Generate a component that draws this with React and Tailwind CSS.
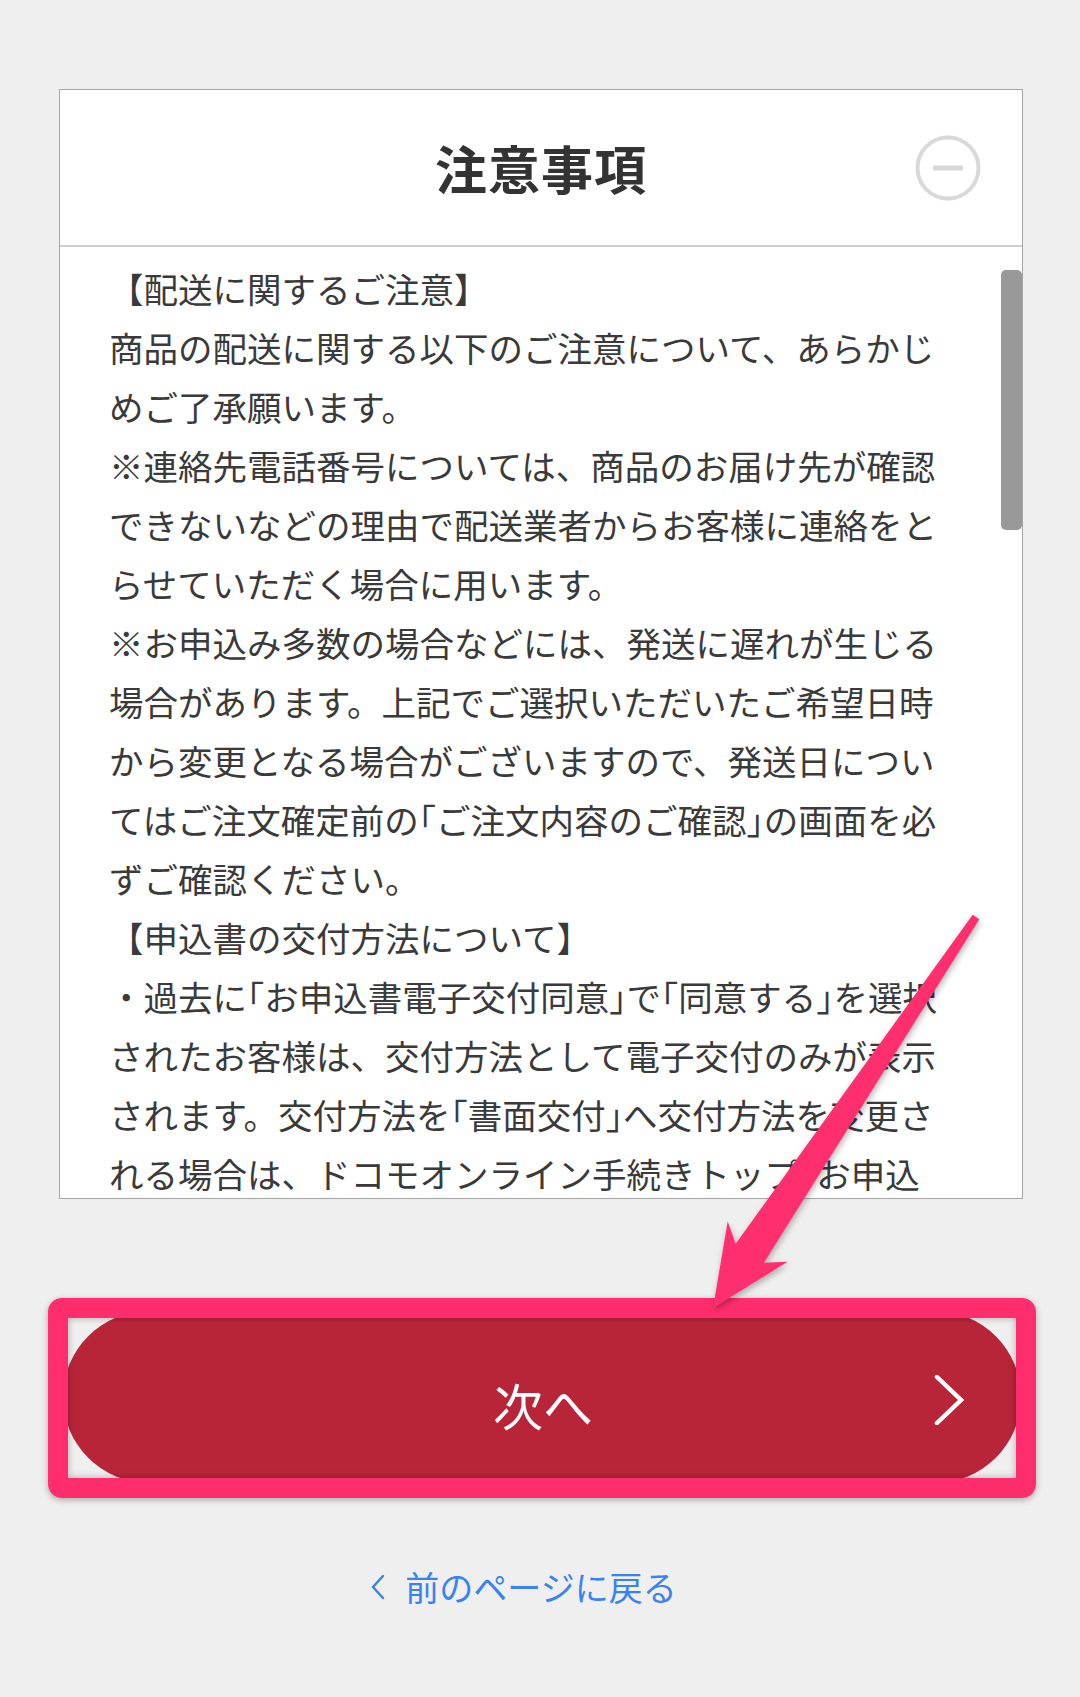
import React from "react";

const lines = [
  "【配送に関するご注意】",
  "商品の配送に関する以下のご注意について、あらかじ",
  "めご了承願います。",
  "※連絡先電話番号については、商品のお届け先が確認",
  "できないなどの理由で配送業者からお客様に連絡をと",
  "らせていただく場合に用います。",
  "※お申込み多数の場合などには、発送に遅れが生じる",
  "場合があります。上記でご選択いただいたご希望日時",
  "から変更となる場合がございますので、発送日につい",
  "てはご注文確定前の「ご注文内容のご確認」の画面を必",
  "ずご確認ください。",
  "【申込書の交付方法について】",
  "・過去に「お申込書電子交付同意」で「同意する」を選択",
  "されたお客様は、交付方法として電子交付のみが表示",
  "されます。交付方法を「書面交付」へ交付方法を変更さ",
  "れる場合は、ドコモオンライン手続きトップ「お申込",
];

// brackets get half-width so the long lines fit like the iOS rendering
const Line = ({ text }) => {
  const parts = text.split(/([「」])/);
  return (
    <div className="whitespace-nowrap">
      {parts.map((p, i) =>
        p === "「" || p === "」" ? (
          <span key={i} className="[font-feature-settings:'halt']">{p}</span>
        ) : (
          <span key={i}>{p}</span>
        )
      )}
    </div>
  );
};

const MinusCircle = () => (
  <svg width="66" height="66" viewBox="0 0 66 66" fill="none">
    <circle cx="33" cy="33" r="30.5" stroke="#d9d9d9" strokeWidth="4" />
    <line x1="18" y1="33" x2="48" y2="33" stroke="#d9d9d9" strokeWidth="5" />
  </svg>
);

export default function App() {
  return (
    <div
      className="relative w-[1080px] h-[1697px] overflow-hidden bg-[#efefef] text-[#333]"
      style={{ fontFamily: '"Noto Sans CJK JP", "Noto Sans", sans-serif' }}
    >
      <div className="pt-[89px] pl-[59px] pr-[57px]">
        {/* notice card */}
        <div className="bg-white border-[1.5px] border-[#a6a6a6]">
          <div className="grid grid-cols-[1fr_auto_1fr] items-center h-[157px] border-b-2 border-[#cfcfcf]">
            <div />
            <h1 className="text-[52px] font-bold leading-none tracking-[1px] text-[#333]">注意事項</h1>
            <div className="justify-self-end pr-[41px]">
              <MinusCircle />
            </div>
          </div>
          <div className="relative h-[951px] overflow-hidden">
            <div className="pl-[49px] pt-[12px] text-[34.5px] leading-[59px] text-[#3a3a3a]">
              {lines.map((t, i) => (
                <Line key={i} text={t} />
              ))}
            </div>
            <div className="absolute right-0 top-[23px] w-[21px] h-[260px] rounded-[5px] bg-[#999]" />
          </div>
        </div>
      </div>

      {/* next button */}
      <div className="mt-[112px] pl-[63px]">
        <button
          type="button"
          className="relative w-[958px] h-[172px] rounded-full bg-[#b82539] text-white flex items-center justify-center"
        >
          <span className="text-[50px] leading-none pt-[14px] pl-[2px]">次へ</span>
          <svg className="absolute right-[55px] top-[64px]" width="32" height="50" viewBox="0 0 32 50" fill="none">
            <polyline points="3,2 27,25 3,48" stroke="#fff" strokeWidth="4.5" strokeLinecap="round" strokeLinejoin="miter" />
          </svg>
        </button>
      </div>

      {/* back link */}
      <div className="mt-[84px] flex items-center justify-center gap-[20px] pr-[32px] text-[#3a83ee]">
        <svg width="14" height="26" viewBox="0 0 14 26" fill="none">
          <polyline points="12,2 2,13 12,24" stroke="#3a83ee" strokeWidth="2.4" strokeLinecap="round" />
        </svg>
        <span className="text-[34px] leading-[40px]">前のページに戻る</span>
      </div>

      {/* annotation frame */}
      <div className="absolute left-[48px] top-[1298px] w-[988px] h-[200px] rounded-[14px] border-[20px] border-[#ff2d6e] shadow-[0_2px_6px_rgba(0,0,0,0.3),inset_0_0_7px_rgba(0,0,0,0.3)]" />

      {/* annotation arrow */}
      <svg className="absolute left-0 top-0 pointer-events-none" width="1080" height="1697" viewBox="0 0 1080 1697">
        <defs>
          <filter id="sh" x="-20%" y="-20%" width="140%" height="140%">
            <feDropShadow dx="1" dy="3" stdDeviation="3" floodColor="#000" floodOpacity="0.3" />
          </filter>
        </defs>
        <polygon
          points="972.7,914.8 735.7,1243.7 727.7,1221.5 713,1308 787.5,1261.7 763.9,1262.7 979.3,919.2"
          fill="#ff2d6e"
          filter="url(#sh)"
        />
      </svg>
    </div>
  );
}
